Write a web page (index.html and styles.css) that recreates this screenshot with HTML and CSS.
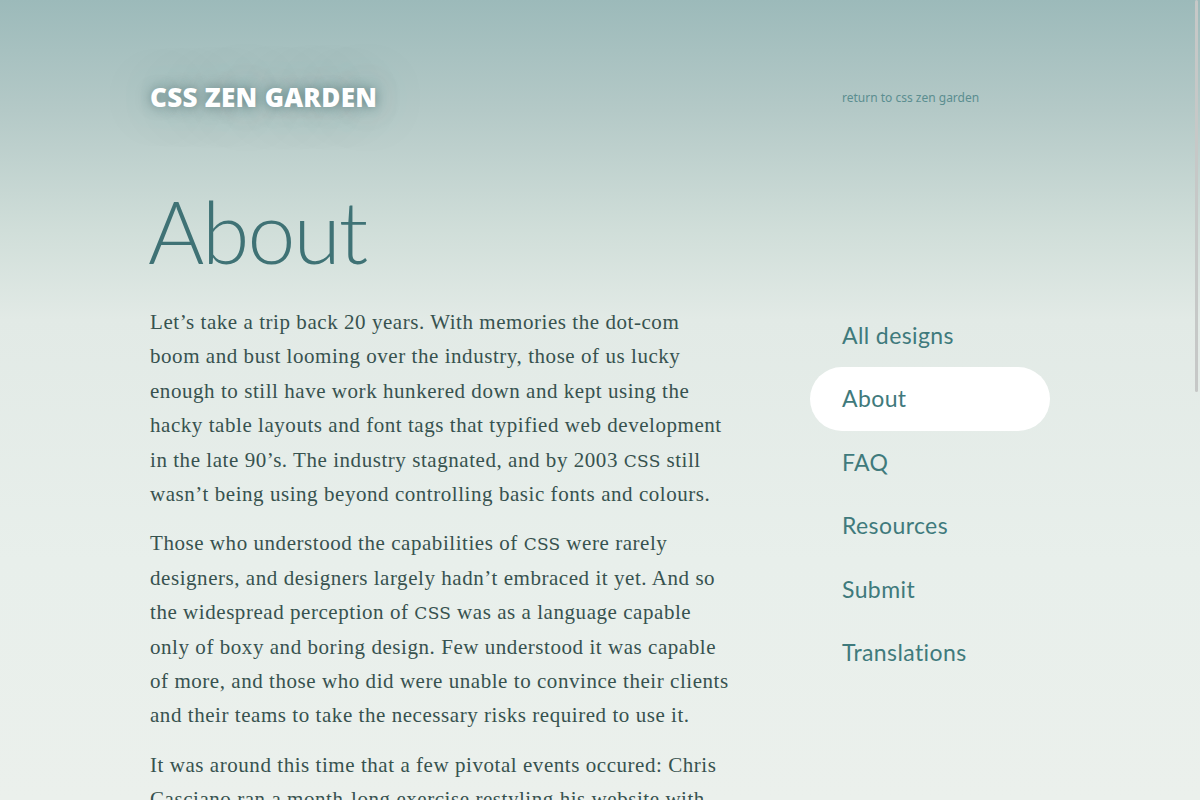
FILE: index.html
```html
<!DOCTYPE html>
<html lang="en">
<head>
<meta charset="utf-8">
<title>About - CSS Zen Garden</title>
<link rel="stylesheet" href="styles.css">
</head>
<body>
<div class="page">
  <header class="site-header">
    <div class="logo">CSS Zen Garden</div>
    <a class="return-link" href="#">return to css zen garden</a>
  </header>
  <h1 class="page-title">About</h1>
  <main class="article">
    <p>Let’s take a trip back 20 years. With memories the dot-com boom and bust looming over the industry, those of us lucky enough to still have work hunkered down and kept using the hacky table layouts and font tags that typified web development in the late 90’s. The industry stagnated, and by 2003 <abbr>CSS</abbr> still wasn’t being using beyond controlling basic fonts and colours.</p>
    <p>Those who understood the capabilities of <abbr>CSS</abbr> were rarely designers, and designers largely hadn’t embraced it yet. And so the widespread perception of <abbr>CSS</abbr> was as a language capable only of boxy and boring design. Few understood it was capable of more, and those who did were unable to convince their clients and their teams to take the necessary risks required to use it.</p>
    <p>It was around this time that a few pivotal events occured: Chris Casciano ran a month-long exercise restyling his website with</p>
  </main>
  <nav class="side-nav">
    <a class="nav-item" href="#">All designs</a>
    <a class="nav-item active" href="#">About</a>
    <a class="nav-item" href="#">FAQ</a>
    <a class="nav-item" href="#">Resources</a>
    <a class="nav-item" href="#">Submit</a>
    <a class="nav-item" href="#">Translations</a>
  </nav>
</div>
<div class="scroll-thumb"></div>
</body>
</html>
```

FILE: styles.css
```css
html, body {
  margin: 0;
  height: 100%;
  overflow: hidden;
}
body {
  background: linear-gradient(to bottom, #9cbaba 0, #b4c9c7 110px, #d0ded9 230px, #e2eae6 320px, #e8efeb 560px, #ebf0ec 800px);
  font-family: "Liberation Serif", serif;
}
.page {
  display: grid;
  grid-template-columns: 580px 240px;
  column-gap: 80px;
  padding: 82px 0 0 150px;
  align-items: start;
}
.site-header {
  grid-column: 1 / 3;
  display: grid;
  grid-template-columns: 580px 240px;
  column-gap: 80px;
  align-items: center;
}
.logo {
  font-family: "Open Sans", sans-serif;
  font-weight: 800;
  font-size: 26px;
  line-height: 31px;
  text-transform: uppercase;
  color: #fff;
  letter-spacing: 0.3px;
  text-shadow: 0 0 12px rgba(40, 84, 86, 0.6), 0 0 50px rgba(70, 110, 112, 0.4), 0 0 120px rgba(90, 130, 130, 0.3);
}
.return-link {
  padding-left: 32px;
  font-family: "Noto Sans", sans-serif;
  font-size: 12px;
  color: #5b8e90;
  text-decoration: none;
}
.page-title {
  grid-column: 1;
  margin: 63px 0 0 -2px;
  font-family: "Lato", sans-serif;
  font-weight: 300;
  font-size: 86px;
  letter-spacing: -2px;
  line-height: 110px;
  color: #3f7275;
}
.article {
  grid-column: 1;
  grid-row: 3;
  margin-top: 19px;
}
.article p {
  margin: 0 0 15px;
  font-size: 21px;
  letter-spacing: 0.55px;
  line-height: 34.4px;
  color: #37524f;
}
.article abbr {
  font-family: "DejaVu Serif", serif;
  font-size: 17px;
  line-height: 1;
  letter-spacing: 0.3px;
  text-decoration: none;
}
.side-nav {
  grid-column: 2;
  grid-row: 3;
  display: flex;
  flex-direction: column;
  margin-top: 18px;
}
.nav-item {
  display: block;
  height: 63.4px;
  line-height: 63.4px;
  padding: 0 32px;
  border-radius: 32px;
  font-family: "Lato", sans-serif;
  font-size: 23px;
  letter-spacing: 0.4px;
  color: #3f7a7c;
  text-decoration: none;
}
.nav-item.active {
  background: #fff;
}
.scroll-thumb {
  position: fixed;
  top: 0;
  right: 2px;
  width: 3px;
  height: 392px;
  background: #c6c8c7;
  border-radius: 2px;
}
```
